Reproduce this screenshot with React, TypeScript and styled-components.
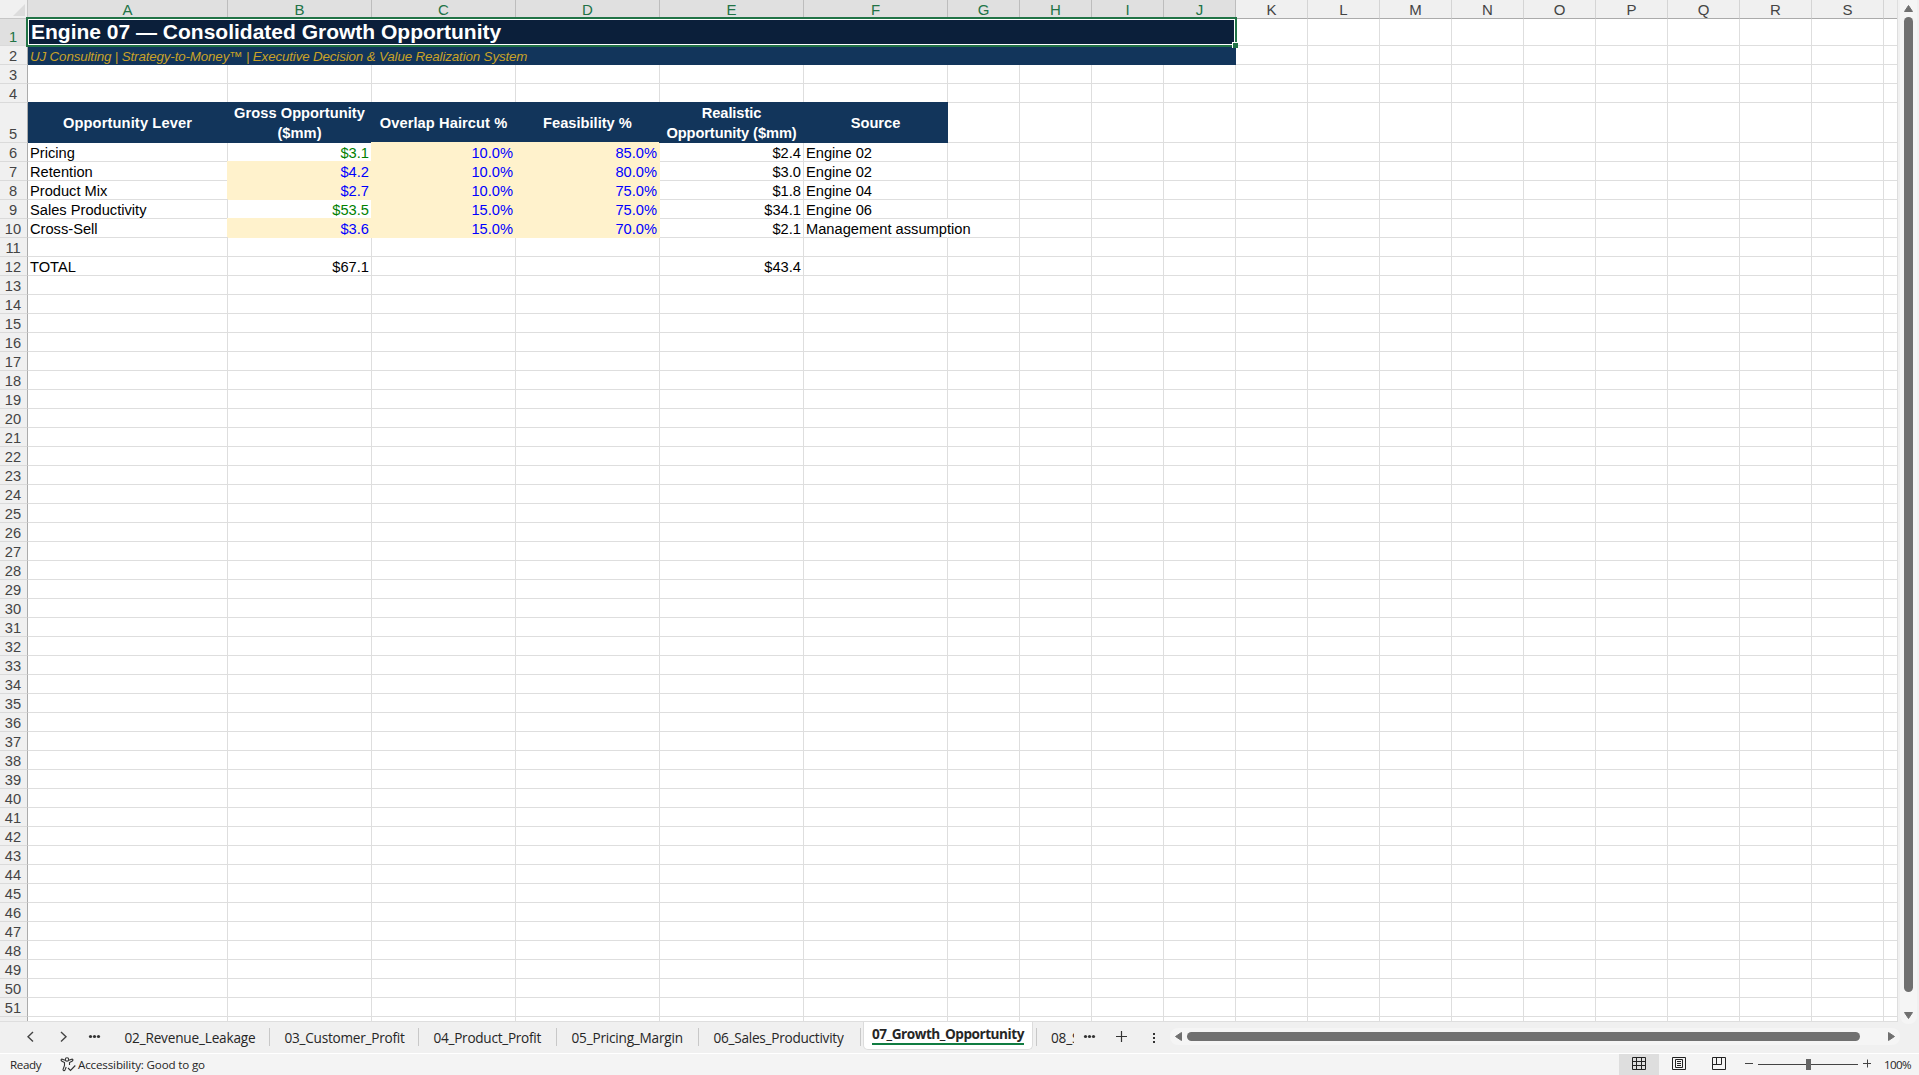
import React from "react";
import styled, { createGlobalStyle } from "styled-components";

const GRID = "#dedede";
const NAVY = "#12355b";
const INPUT = "#fff2cc";
const GREEN = "#217346";

const Global = createGlobalStyle`
  * { box-sizing: border-box; }
  html, body { margin: 0; padding: 0; overflow: hidden; background: #f0f0f0; }
`;

const Window = styled.div`
  width: 1919px;
  height: 1075px;
  display: flex;
  flex-direction: column;
  background: #f0f0f0;
  font-family: "Liberation Sans", Arial, sans-serif;
  font-size: 14.67px;
  color: #000;
  white-space: nowrap;
`;

const Workspace = styled.div`
  height: 1022px;
  display: flex;
`;

const Sheet = styled.div`
  position: relative;
  flex: none;
  width: 1898px;
  height: 1022px;
  overflow: hidden;
  background: #fff;
  border-right: 1px solid ${GRID};
  border-bottom: 1px solid ${GRID};
`;

const Row = styled.div<{ $h: number }>`
  display: flex;
  height: ${(p) => p.$h}px;
`;

const Corner = styled.div`
  flex: none;
  width: 28px;
  height: 19px;
  display: flex;
  align-items: flex-end;
  justify-content: flex-end;
  padding: 0 2px 2px 0;
  background: #f0f0f0;
  border-right: 1px solid #c6c6c6;
  border-bottom: 1px solid #c6c6c6;
`;

const ColHead = styled.div<{ $w: number; $on: boolean }>`
  flex: none;
  width: ${(p) => p.$w}px;
  height: 19px;
  line-height: 19px;
  text-align: center;
  font-size: 15px;
  color: ${(p) => (p.$on ? GREEN : "#444")};
  background: ${(p) => (p.$on ? "#e0e0e0" : "#f0f0f0")};
  border-right: 1px solid ${(p) => (p.$on ? "#bdbdbd" : "#d4d4d4")};
  border-bottom: 1px solid #ababab;
`;

const RowHead = styled.div<{ $on: boolean }>`
  flex: none;
  width: 28px;
  display: flex;
  align-items: flex-end;
  justify-content: center;
  padding-right: 1px;
  line-height: 16px;
  color: ${(p) => (p.$on ? GREEN : "#444")};
  background: ${(p) => (p.$on ? "#e0e0e0" : "#f0f0f0")};
  border-right: 1px solid #ababab;
  border-bottom: 1px solid #dadada;
`;

const Cell = styled.div<{ $w: number; $fill?: string; $color?: string; $right?: boolean; $spill?: boolean }>`
  flex: none;
  width: ${(p) => p.$w}px;
  padding: 2px 2px 0 2px;
  line-height: 17px;
  text-align: ${(p) => (p.$right ? "right" : "left")};
  color: ${(p) => p.$color ?? "#000"};
  background: ${(p) => p.$fill ?? "transparent"};
  border-right: 1px solid ${(p) => (p.$spill ? "transparent" : p.$fill ?? GRID)};
  border-bottom: 1px solid ${(p) => p.$fill ?? GRID};
  box-shadow: ${(p) => (p.$fill ? `-1px -1px 0 ${p.$fill}` : "none")};
`;

const HeadCell = styled.div<{ $w: number; $ls: number }>`
  flex: none;
  width: ${(p) => p.$w}px;
  display: flex;
  align-items: center;
  justify-content: center;
  text-align: center;
  white-space: pre;
  padding-right: 1px;
  line-height: 20px;
  font-weight: 700;
  letter-spacing: ${(p) => p.$ls}px;
  color: #fff;
  background: ${NAVY};
  box-shadow: 0 -1px 0 ${NAVY};
`;

const Title = styled.div`
  flex: none;
  width: 1208px;
  padding-left: 3px;
  line-height: 25px;
  font-size: 21px;
  font-weight: 700;
  color: #fff;
  background: #0b1f3a;
`;

const Subtitle = styled.div`
  flex: none;
  width: 1208px;
  padding-left: 2px;
  line-height: 21px;
  font-size: 13.33px;
  letter-spacing: -0.13px;
  font-style: italic;
  color: #c9a227;
  background: ${NAVY};
`;

const Selection = styled.div`
  position: absolute;
  left: 26px;
  top: 17px;
  width: 1211px;
  height: 30px;
  border: 2px solid ${GREEN};
  box-shadow: inset 0 0 0 1px #fff;
`;

const FillHandle = styled.div`
  position: absolute;
  left: 1232px;
  top: 42px;
  width: 6px;
  height: 6px;
  background: ${GREEN};
  border-top: 1px solid #fff;
  border-left: 1px solid #fff;
`;

const VBar = styled.div`
  flex: none;
  width: 17px;
  height: 1024px;
  margin-left: 2px;
  padding: 5px 0 5px;
  display: flex;
  flex-direction: column;
  align-items: center;
  background: #f5f5f5;
  border-radius: 0 0 8px 8px;
`;

const VThumb = styled.div`
  width: 9px;
  height: 975px;
  margin: 5px 0 20px;
  border-radius: 4.5px;
  background: #707070;
`;

const TabBar = styled.div`
  height: 31px;
  display: flex;
  align-items: flex-start;
  font-family: "Open Sans", "Noto Sans", sans-serif;
  font-size: 13.6px;
  color: #262626;
`;

const TabNav = styled.div`
  flex: none;
  width: 110px;
  height: 31px;
  display: flex;
  padding-left: 27px;
`;

const Tab = styled.div<{ $w: number; $ls: number }>`
  flex: none;
  width: ${(p) => p.$w}px;
  height: 18px;
  margin-top: 6px;
  padding-left: 14.5px;
  line-height: 19px;
  letter-spacing: ${(p) => p.$ls}px;
  border-right: 1px solid #c8c8c8;
`;

const ActiveTab = styled.div`
  flex: none;
  width: 170px;
  height: 29px;
  margin: -1px 3px 0 2px;
  padding: 3px 8px 0;
  background: #fff;
  border: 1px solid #dcdcdc;
  border-top: 0;
  border-radius: 0 0 5px 5px;
`;

const ActiveLabel = styled.div`
  width: 152px;
  height: 21px;
  line-height: 19px;
  font-weight: 700;
  letter-spacing: -0.47px;
  border-bottom: 2px solid #107c41;
`;

const CutTab = styled.div`
  flex: none;
  width: 38px;
  height: 18px;
  margin-top: 6px;
  padding-left: 14px;
  line-height: 19px;
  letter-spacing: -0.2px;
  overflow: hidden;
  border-left: 1px solid #c8c8c8;
`;

const TabTools = styled.div`
  flex: none;
  width: 96px;
  height: 31px;
`;

const HBar = styled.div`
  flex: none;
  width: 730px;
  height: 17px;
  margin-top: 6px;
  padding: 0 5px;
  display: flex;
  align-items: center;
  background: #f5f5f5;
  border-radius: 8px;
`;

const HThumb = styled.div`
  width: 673px;
  height: 9px;
  margin: 0 28px 0 5px;
  border-radius: 4.5px;
  background: #707070;
`;

const Status = styled.div`
  height: 22px;
  display: flex;
  align-items: center;
  border-top: 1px solid #fff;
  background: #f4f4f4;
  font-family: "Open Sans", "Noto Sans", sans-serif;
  font-size: 11.6px;
  color: #262626;
`;

const Ready = styled.span`
  flex: none;
  width: 50px;
  margin-left: 10px;
  letter-spacing: -0.35px;
`;

const Access = styled.span`
  flex: none;
  width: 1559px;
  display: flex;
  align-items: center;
`;

const AccessLabel = styled.span`
  margin-left: 2px;
  letter-spacing: -0.15px;
`;

const ViewButton = styled.div<{ $on?: boolean }>`
  flex: none;
  width: 40px;
  height: 21px;
  display: flex;
  justify-content: center;
  background: ${(p) => (p.$on ? "#dedede" : "transparent")};
`;

const Zoom = styled.div`
  display: flex;
  align-items: center;
  margin-left: 5px;
`;

const Percent = styled.span`
  margin-left: 13px;
  letter-spacing: -0.6px;
`;

const columns: [string, number][] = [
  ["A", 200], ["B", 144], ["C", 144], ["D", 144], ["E", 144], ["F", 144],
  ..."GHIJKLMNOPQRS".split("").map((c) => [c, 72] as [string, number]),
  ["", 16],
];

const headings: [string, number][] = [
  ["Opportunity Lever", 0.13],
  ["Gross Opportunity\n($mm)", 0.03],
  ["Overlap Haircut %", 0.08],
  ["Feasibility %", 0],
  ["Realistic\nOpportunity ($mm)", -0.1],
  ["Source", 0],
];

type Line = { lever: string; gross: string; linked?: boolean; cut?: string; feas?: string; real: string; source?: string };

const lines: Record<number, Line> = {
  6: { lever: "Pricing", gross: "$3.1", linked: true, cut: "10.0%", feas: "85.0%", real: "$2.4", source: "Engine 02" },
  7: { lever: "Retention", gross: "$4.2", cut: "10.0%", feas: "80.0%", real: "$3.0", source: "Engine 02" },
  8: { lever: "Product Mix", gross: "$2.7", cut: "10.0%", feas: "75.0%", real: "$1.8", source: "Engine 04" },
  9: { lever: "Sales Productivity", gross: "$53.5", linked: true, cut: "15.0%", feas: "75.0%", real: "$34.1", source: "Engine 06" },
  10: { lever: "Cross-Sell", gross: "$3.6", cut: "15.0%", feas: "70.0%", real: "$2.1", source: "Management assumption" },
  12: { lever: "TOTAL", gross: "$67.1", real: "$43.4" },
};

const Blank = ({ from }: { from: number }) => (
  <>
    {columns.slice(from).map(([name, w]) => (
      <Cell key={name} $w={w} />
    ))}
  </>
);

const DataCells = ({ line }: { line: Line }) => {
  const open = line.cut !== undefined;
  const grossInput = open && !line.linked;
  return (
    <>
      <Cell $w={200}>{line.lever}</Cell>
      <Cell $w={144} $right $fill={grossInput ? INPUT : undefined} $color={line.linked ? "#008000" : grossInput ? "#0000ff" : "#000"}>
        {line.gross}
      </Cell>
      <Cell $w={144} $right $fill={open ? INPUT : undefined} $color="#0000ff">{line.cut}</Cell>
      <Cell $w={144} $right $fill={open ? INPUT : undefined} $color="#0000ff">{line.feas}</Cell>
      <Cell $w={144} $right>{line.real}</Cell>
      <Cell $w={144} $spill={line.source === "Management assumption"}>{line.source}</Cell>
      <Blank from={6} />
    </>
  );
};

const heightOf = (n: number) => (n === 1 ? 27 : n === 5 ? 40 : 19);

const SheetRow = ({ n }: { n: number }) => (
  <Row $h={heightOf(n)}>
    <RowHead $on={n === 1}>{n < 52 ? n : ""}</RowHead>
    {n === 1 ? (
      <><Title>Engine 07 — Consolidated Growth Opportunity</Title><Blank from={10} /></>
    ) : n === 2 ? (
      <><Subtitle>UJ Consulting | Strategy-to-Money™ | Executive Decision &amp; Value Realization System</Subtitle><Blank from={10} /></>
    ) : n === 5 ? (
      <>
        {headings.map(([h, ls], i) => <HeadCell key={h} $w={columns[i][1]} $ls={ls}>{h}</HeadCell>)}
        <Blank from={6} />
      </>
    ) : lines[n] ? (
      <DataCells line={lines[n]} />
    ) : (
      <Blank from={0} />
    )}
  </Row>
);

const tabs: [string, number, number][] = [
  ["02_Revenue_Leakage", 160, -0.18],
  ["03_Customer_Profit", 149, -0.24],
  ["04_Product_Profit", 138, -0.27],
  ["05_Pricing_Margin", 142, -0.2],
  ["06_Sales_Productivity", 162, -0.25],
];

export default function App() {
  return (
    <Window>
      <Global />
      <Workspace>
        <Sheet>
          <Row $h={19}>
            <Corner>
              <svg width="12" height="12"><path d="M12 0V12H0Z" fill="#dcdcdc" /></svg>
            </Corner>
            {columns.map(([name, w], i) => (
              <ColHead key={name} $w={w} $on={i < 10}>{name}</ColHead>
            ))}
          </Row>
          {Array.from({ length: 52 }, (_, i) => <SheetRow key={i} n={i + 1} />)}
          <Selection />
          <FillHandle />
        </Sheet>
        <VBar>
          <svg width="9" height="7"><path d="M4.5 0.5L8.5 6.5H0.5Z" fill="#707070" stroke="#707070" strokeLinejoin="round" /></svg>
          <VThumb />
          <svg width="9" height="7"><path d="M4.5 6.5L8.5 0.5H0.5Z" fill="#707070" stroke="#707070" strokeLinejoin="round" /></svg>
        </VBar>
      </Workspace>
      <TabBar>
        <TabNav>
          <svg width="83" height="31" fill="none" stroke="#444" strokeWidth="1.4">
            <path d="M6 10L1 14.7L6 19.4M34 10L39 14.7L34 19.4" />
            <g fill="#333" stroke="none"><circle cx="63.5" cy="14.5" r="1.6" /><circle cx="67.5" cy="14.5" r="1.6" /><circle cx="71.5" cy="14.5" r="1.6" /></g>
          </svg>
        </TabNav>
        {tabs.map(([name, w, ls]) => <Tab key={name} $w={w} $ls={ls}>{name}</Tab>)}
        <ActiveTab><ActiveLabel>07_Growth_Opportunity</ActiveLabel></ActiveTab>
        <CutTab>08_S</CutTab>
        <TabTools>
          <svg width="95" height="31" fill="#333">
            <circle cx="11.5" cy="14.5" r="1.6" /><circle cx="15.5" cy="14.5" r="1.6" /><circle cx="19.5" cy="14.5" r="1.6" />
            <path d="M42 14.5H53M47.5 9V20" stroke="#333" strokeWidth="1.2" />
            <rect x="79" y="11" width="2" height="2" /><rect x="79" y="15" width="2" height="2" /><rect x="79" y="19" width="2" height="2" />
          </svg>
        </TabTools>
        <HBar>
          <svg width="7" height="9"><path d="M0.5 4.5L6.5 0.5V8.5Z" fill="#707070" stroke="#707070" strokeLinejoin="round" /></svg>
          <HThumb />
          <svg width="7" height="9"><path d="M6.5 4.5L0.5 0.5V8.5Z" fill="#707070" stroke="#707070" strokeLinejoin="round" /></svg>
        </HBar>
      </TabBar>
      <Status>
        <Ready>Ready</Ready>
        <Access>
          <svg width="16" height="15" fill="none" stroke="#333" strokeWidth="1.1">
            <circle cx="7" cy="2.5" r="1.7" />
            <path d="M5.3 3.2C3.500 3.200 2.500 1.800 1.500 2.200C.6 2.800 1.200 3.800 2 4.200L4.500 5.500V8.500L3 12.500C3 13.800 4.500 14 5 13L6.200 10M8.700 3.200C10.500 3.200 11.500 1.800 12.500 2.200C13.400 2.800 12.800 3.800 12 4.200L9.500 5.500V8M8 11L10.500 13.500L15.300 8.500" />
          </svg>
          <AccessLabel>Accessibility: Good to go</AccessLabel>
        </Access>
        <ViewButton $on>
          <svg width="14" height="21" fill="none" stroke="#222"><path d="M.5 3.5H13.5V15.5H.5ZM4.5 3.5V15.5M9.5 3.5V15.5M.5 7.5H13.5M.5 11.5H13.5" /></svg>
        </ViewButton>
        <ViewButton>
          <svg width="14" height="21" fill="none" stroke="#222"><path d="M.5 3.5H13.5V15.5H.5ZM3.5 5.5H10.5V13.5H3.5ZM5 7.5H9M5 9.5H9M5 11.5H9" /></svg>
        </ViewButton>
        <ViewButton>
          <svg width="14" height="21" fill="none" stroke="#222"><path d="M.5 3.5H13.5V15.5H.5ZM.5 10.5H9.5V3.5M4.5 3.5V10.5" /></svg>
        </ViewButton>
        <Zoom>
          <svg width="127" height="21" fill="none" stroke="#444"><path d="M1 9.5H9M14 10.5H114M119 9.5H127M123.5 5.5V13.5" /><rect x="62" y="5" width="5" height="11" fill="#666" stroke="none" /></svg>
          <Percent>100%</Percent>
        </Zoom>
      </Status>
    </Window>
  );
}
